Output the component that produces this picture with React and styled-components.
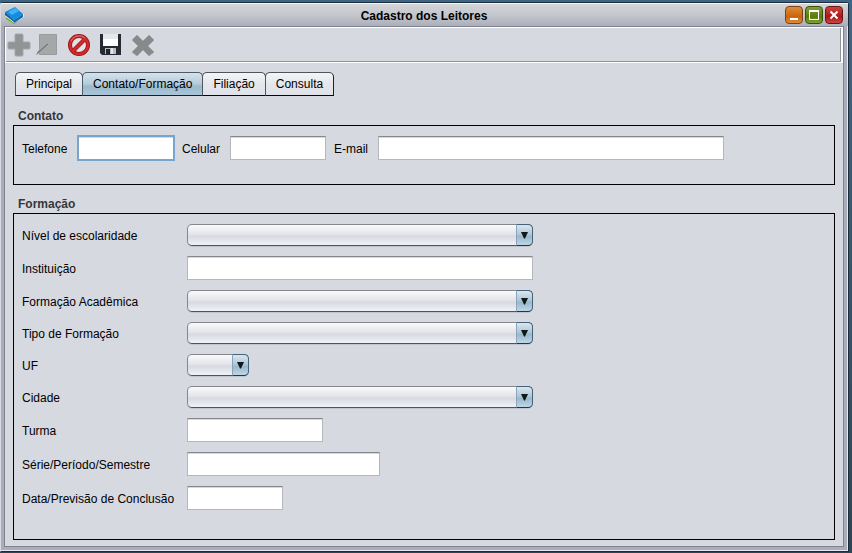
import React from "react";
import styled, { createGlobalStyle, css } from "styled-components";

const Global = createGlobalStyle`
  *, *::before, *::after { box-sizing: border-box; }
  body {
    margin: 0;
    background: #365871;
    color: #000;
    font: 12px/16px "Liberation Sans", Arial, sans-serif;
  }
  button, input, select { font: inherit; color: inherit; }
`;

const Desktop = styled.div`
  display: flex;
  min-height: 100vh;
  padding: 2px 3px 1px 0;
  background: linear-gradient(#3c6688, #33546a 60%, #2d4656);
`;

const Window = styled.section`
  flex: 1;
  display: flex;
  flex-direction: column;
  border: 1px solid #1e2b38;
  border-left-color: #d9dbe0;
  border-radius: 3px 3px 0 0;
  background: #a9adba;
  box-shadow: inset 0 1px #f4f5f7, inset -1px -1px #e6e8ec;
`;

const TitleBar = styled.header`
  display: grid;
  grid-template-columns: 1fr auto 1fr;
  align-items: center;
  height: 23px;
  padding: 0 5px 0 4px;
  border-top: 1px solid #f4f5f7;
  background: linear-gradient(#d3d5d9, #c3c6cb 50%, #acafba);
`;

const Title = styled.h1`
  margin: 0;
  padding-top: 1px;
  font-size: 12px;
  line-height: 16px;
`;

const WindowControls = styled.div`
  display: flex;
  justify-content: flex-end;
  gap: 2px;
`;

const controlColors = {
  minimize: ["#dd8b3c", "#c9660d", "#7d420f"],
  maximize: ["#7f9f37", "#5b7c0c", "#39500b"],
  close: ["#cb4440", "#ad1717", "#6c1414"],
};

const ControlButton = styled.button`
  display: grid;
  place-items: center;
  width: 18px;
  height: 18px;
  padding: 0;
  border: 1px solid ${(p) => controlColors[p.$kind][2]};
  border-radius: 4px;
  background: linear-gradient(
    ${(p) => controlColors[p.$kind][0]},
    ${(p) => controlColors[p.$kind][1]} 60%,
    ${(p) => controlColors[p.$kind][0]}
  );
`;

const Content = styled.main`
  flex: 1;
  display: flex;
  flex-direction: column;
  margin: 0 4px 4px 3px;
  border: 1px solid #7f838f;
  background: #d6d9e0;
`;

const Toolbar = styled.div`
  display: flex;
  align-items: center;
  gap: 4px;
  height: 36px;
  margin-bottom: 1px;
  padding-left: 1px;
  border: 1px solid #fff;
  border-right-width: 2px;
  box-shadow: inset -1px -1px #8e929b;
`;

const ToolButton = styled.button`
  display: grid;
  place-items: center;
  width: ${(p) => p.$width}px;
  height: 28px;
  padding: 0;
  border: 0;
  background: none;
`;

const Tabs = styled.div`
  display: flex;
  margin: 8px 10px 0;
`;

const Tab = styled.button`
  height: 24px;
  padding: 0 10px;
  border: 1px solid #50545c;
  border-right-color: #1b222b;
  border-bottom: 1px solid #05080c;
  border-radius: 5px 5px 0 0;
  background: linear-gradient(#f4f5f7, #e4e6eb 50%, #dfe2e9);
  white-space: nowrap;
  & + & { margin-left: -1px; }
  ${(p) =>
    p.$active &&
    css`
      border-color: #4b5d6c;
      border-bottom-color: #10202d;
      background: linear-gradient(#d5e2ec, #b5cbdb 50%, #9db9cc 60%, #a9c5d8);
    `}
`;

const Group = styled.section`
  display: flex;
  flex-direction: column;
  flex: ${(p) => (p.$grow ? 1 : "none")};
  margin: ${(p) => (p.$grow ? "11px 8px 6px" : "12px 8px 0")};
`;

const GroupTitle = styled.h2`
  margin: 0 0 1px 5px;
  color: #35363a;
  font-size: 12px;
  line-height: 16px;
`;

const GroupBox = styled.div`
  flex: 1;
  padding: 10px 8px;
  border: 1px solid #000;
`;

const ContactRow = styled.div`
  display: flex;
  align-items: center;
  gap: 8px;
  padding-bottom: 13px;
`;

const FieldGrid = styled.div`
  display: grid;
  grid-template-columns: 165px minmax(0, 1fr);
  row-gap: 9px;
  align-items: center;
`;

const Label = styled.label`
  min-width: ${(p) => p.$width || 0}px;
  white-space: nowrap;
`;

const TextField = styled.input`
  width: ${(p) => p.$width}px;
  min-width: 0;
  height: 24px;
  margin: 0 0 1px;
  padding: 0 4px;
  border: 1px solid #b5b7bd;
  border-top-color: #85878c;
  border-radius: 0;
  background: #fff;
  box-shadow: inset 0 1px #d6d8db;
  outline: ${(p) => (p.$highlighted ? "2px solid #78a5cd" : "none")};
  outline-offset: -1px;
`;

const SelectShell = styled.div`
  display: grid;
  width: ${(p) => p.$width}px;
  max-width: 100%;
  height: 23px;
`;

const Select = styled.select`
  grid-area: 1 / 1;
  appearance: none;
  width: 100%;
  height: 22px;
  padding: 0 20px 0 6px;
  border: 1px solid #85878f;
  border-bottom-color: #4b5262;
  border-radius: 5px;
  background: linear-gradient(#fafafc, #e2e4e9 48%, #d6d9df 55%, #f0f2f8);
  box-shadow: 0 1px #c1c5cd;
  outline: none;
`;

const SelectArrow = styled.span`
  grid-area: 1 / 1;
  justify-self: end;
  display: grid;
  place-items: center;
  width: 17px;
  height: 22px;
  border: 1px solid #47637a;
  border-left-color: #87a4bb;
  border-bottom-color: #20374c;
  border-radius: 0 5px 5px 0;
  background: linear-gradient(#d9e6f0, #adc5d6 50%, #9ab7ca 56%, #bdd7e8);
  pointer-events: none;
`;

function BookIcon() {
  return (
    <svg width="20" height="20" viewBox="0 0 20 20" aria-hidden="true">
      <path d="M2 10 1 14l8 5 4-3Z" fill="#7da32b" />
      <path d="M1 9v3l8 6 10-6v-3Z" fill="#dfe9ee" />
      <path d="M0 7 10 2l8 7-9 6Z" fill="#168be0" />
      <path d="M0 7v3l9 7v-2Z" fill="#0863a5" />
      <path d="m9 15 9-6v3l-9 6Z" fill="#0b6cae" />
      <path d="m3 7 7-4 4 3-7 4Z" fill="#42b2f4" />
    </svg>
  );
}

function AddIcon() {
  return (
    <svg width="24" height="24" viewBox="1 1 24 24" aria-hidden="true">
      <path d="M10 2h6q1 0 1 1v7h6q1 0 1 1v5q0 1-1 1h-6v6q0 1-1 1h-6q-1 0-1-1v-6H3q-1 0-1-1v-5q0-1 1-1h6V3q0-1 1-1Z" fill="#929395" stroke="#a4a5a9" />
    </svg>
  );
}

function EditIcon() {
  return (
    <svg width="24" height="24" viewBox="0 0 24 24" aria-hidden="true">
      <path d="M3.500 1.500h17v20h-17Z" fill="#a6a7a9" stroke="#999b9f" />
      <path d="m0 22 2-4 9-8 2 1-9 8Z" fill="#86888b" stroke="#b6b7ba" strokeWidth=".6" />
      <path d="m1 21 11-10" stroke="#717377" />
    </svg>
  );
}

function CancelIcon() {
  return (
    <svg width="24" height="24" viewBox="0 0 24 24" aria-hidden="true">
      <circle cx="12" cy="12" r="9" fill="#e4e1e5" stroke="#8e1418" strokeWidth="4" />
      <path d="m6 18 12-12" stroke="#8e1418" strokeWidth="4" />
      <circle cx="12" cy="12" r="9" fill="none" stroke="#d3292c" strokeWidth="2.6" />
      <path d="m6 18 12-12" stroke="#d3292c" strokeWidth="2.8" />
      <path d="M4 8a9 9 0 0 1 14-3" fill="none" stroke="#ee7470" />
    </svg>
  );
}

function SaveIcon() {
  return (
    <svg width="24" height="24" viewBox="0 0 24 24" aria-hidden="true">
      <path d="M1 1h21v21H3l-2-2Z" fill="#252a33" />
      <path d="M4 1h15v12H4Z" fill="#e4e8ed" />
      <path d="M4 6h15v7H4Z" fill="#fff" />
      <path d="M6 15h11v6H6Z" fill="#b9bcc1" />
      <path d="M7 16h4v5H7Z" fill="#20242b" />
      <path d="M12 15h2v6h-2Z" fill="#e4e6e9" />
    </svg>
  );
}

function DeleteIcon() {
  return (
    <svg width="26" height="26" viewBox="0 0 26 26" aria-hidden="true">
      <path d="m7 3 6 6 6-6 5 5-6 6 6 6-5 4-6-6-6 6-5-4 6-6-6-6Z" fill="#88898b" stroke="#a3a5a8" strokeLinejoin="round" />
    </svg>
  );
}

function ControlIcon({ kind }) {
  return (
    <svg width="14" height="14" viewBox="0 0 14 14" fill="none" stroke="#fff" aria-hidden="true">
      {kind === "minimize" && <path d="M3 11h8" strokeWidth="2" />}
      {kind === "maximize" && (
        <>
          <path d="M2.500 3.500h9v8h-9Z" />
          <path d="M2 3h10" strokeWidth="2" />
        </>
      )}
      {kind === "close" && <path d="m3.500 3.500 7 7m0-7-7 7" strokeWidth="2" />}
    </svg>
  );
}

const tools = [
  { label: "Novo", Icon: AddIcon, width: 24, disabled: true },
  { label: "Editar", Icon: EditIcon, width: 26, disabled: true },
  { label: "Cancelar", Icon: CancelIcon, width: 28 },
  { label: "Salvar", Icon: SaveIcon, width: 28 },
  { label: "Excluir", Icon: DeleteIcon, width: 28, disabled: true },
];

const controls = [
  { kind: "minimize", label: "Minimizar" },
  { kind: "maximize", label: "Maximizar" },
  { kind: "close", label: "Fechar" },
];

const tabs = ["Principal", "Contato/Formação", "Filiação", "Consulta"];

const contactFields = [
  { id: "telefone", label: "Telefone", labelWidth: 48, width: 96, highlighted: true },
  { id: "celular", label: "Celular", labelWidth: 40, width: 96 },
  { id: "email", label: "E-mail", labelWidth: 36, width: 346 },
];

const educationFields = [
  { id: "nivel", label: "Nível de escolaridade", width: 346, select: true },
  { id: "instituicao", label: "Instituição", width: 346 },
  { id: "formacao", label: "Formação Acadêmica", width: 346, select: true },
  { id: "tipo", label: "Tipo de Formação", width: 346, select: true },
  { id: "uf", label: "UF", width: 62, select: true },
  { id: "cidade", label: "Cidade", width: 346, select: true },
  { id: "turma", label: "Turma", width: 136 },
  { id: "serie", label: "Série/Período/Semestre", width: 193 },
  { id: "conclusao", label: "Data/Previsão de Conclusão", width: 96 },
];

function ComboBox({ id, width }) {
  return (
    <SelectShell $width={width}>
      <Select id={id} />
      <SelectArrow>
        <svg width="7" height="7" viewBox="0 0 7 7" aria-hidden="true">
          <path d="M0 0h7L4 6.500H3Z" fill="#11171d" />
        </svg>
      </SelectArrow>
    </SelectShell>
  );
}

export default function App() {
  return (
    <>
      <Global />
      <Desktop>
        <Window>
          <TitleBar>
            <BookIcon />
            <Title>Cadastro dos Leitores</Title>
            <WindowControls>
              {controls.map(({ kind, label }) => (
                <ControlButton key={kind} $kind={kind} type="button" aria-label={label}>
                  <ControlIcon kind={kind} />
                </ControlButton>
              ))}
            </WindowControls>
          </TitleBar>
          <Content>
            <Toolbar role="toolbar">
              {tools.map(({ label, Icon, width, disabled }) => (
                <ToolButton key={label} $width={width} type="button" aria-label={label} disabled={disabled}>
                  <Icon />
                </ToolButton>
              ))}
            </Toolbar>
            <Tabs role="tablist">
              {tabs.map((name, i) => (
                <Tab key={name} type="button" role="tab" aria-selected={i === 1} $active={i === 1}>
                  {name}
                </Tab>
              ))}
            </Tabs>
            <Group>
              <GroupTitle>Contato</GroupTitle>
              <GroupBox>
                <ContactRow>
                  {contactFields.map((f) => (
                    <React.Fragment key={f.id}>
                      <Label htmlFor={f.id} $width={f.labelWidth}>
                        {f.label}
                      </Label>
                      <TextField id={f.id} $width={f.width} $highlighted={f.highlighted} />
                    </React.Fragment>
                  ))}
                </ContactRow>
              </GroupBox>
            </Group>
            <Group $grow>
              <GroupTitle>Formação</GroupTitle>
              <GroupBox>
                <FieldGrid>
                  {educationFields.map((f) => (
                    <React.Fragment key={f.id}>
                      <Label htmlFor={f.id}>{f.label}</Label>
                      {f.select ? (
                        <ComboBox id={f.id} width={f.width} />
                      ) : (
                        <TextField id={f.id} $width={f.width} />
                      )}
                    </React.Fragment>
                  ))}
                </FieldGrid>
              </GroupBox>
            </Group>
          </Content>
        </Window>
      </Desktop>
    </>
  );
}
